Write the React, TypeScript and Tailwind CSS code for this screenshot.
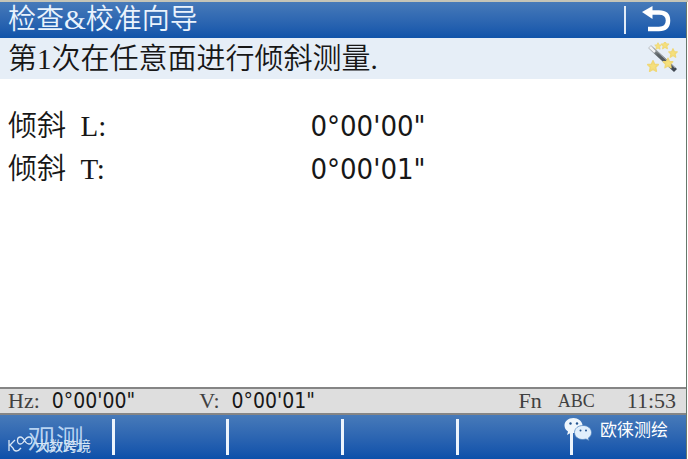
import { useState } from 'react';

const readings = [
  { label: '倾斜  L:', value: '0°00\'00"' },
  { label: '倾斜  T:', value: '0°00\'01"' },
];

const softKeys = ['观测', '', '', '', '', ''];

const numberFont = "font-['DejaVu_Sans_Condensed','Noto_Sans',sans-serif]";
const textFont = "font-['Liberation_Serif','Noto_Sans_CJK_SC',serif]";

function BackIcon() {
  return (
    <svg width="30" height="28" viewBox="0 0 30 28" fill="none" aria-hidden="true">
      <path d="M8 6.500H17C23.500 6.500 26 9.500 26 14.500S23.500 23 17 23H6" stroke="white" strokeWidth="4.500" />
      <path d="M0 6L10.500 0V13Z" fill="white" />
    </svg>
  );
}

function WandIcon() {
  const star = 'M0 -5L1.500 -1.600L5 -1.300L2.400 1.200L3.200 5L0 3L-3.200 5L-2.400 1.200L-5 -1.300L-1.500 -1.600Z';
  return (
    <svg width="34" height="34" viewBox="0 0 34 34" aria-hidden="true">
      <defs>
        <linearGradient id="wand" x1="0" y1="0" x2="1" y2="1">
          <stop offset="0" stopColor="#d4d8dc" />
          <stop offset="0.35" stopColor="#5d6468" />
          <stop offset="1" stopColor="#3d4550" />
        </linearGradient>
      </defs>
      <path d="M2 6L5 3L31 27L28 30Z" fill="url(#wand)" />
      <path d="M10 8.500L29 26" stroke="#aeb4b8" strokeWidth="0.8" />
      <path d="M4 5L9 10" stroke="#f1f2f3" strokeWidth="2.500" />
      <g fill="#f5e07c" stroke="#f0d876" strokeWidth="1.500" strokeLinejoin="round">
        <path d={star} transform="translate(12 4) scale(0.65)" />
        <path d={star} transform="translate(19 3) scale(0.75)" />
        <path d={star} transform="translate(27 11) scale(0.85)" />
        <path d={star} transform="translate(7 24) scale(1.05)" />
        <path d={star} transform="translate(22 21) scale(0.95)" />
      </g>
    </svg>
  );
}

function ChatIcon() {
  return (
    <svg width="28" height="24" viewBox="0 0 28 24" aria-hidden="true">
      <path d="M9.500 1C4.300 1 .500 4.200 .500 8.500C.500 11 1.800 13.200 4 14.500L3 18L7 15.800C8.600 16.200 10.500 16.200 12 15.800C17 15 19 12 18.500 8C18 4 14 1 9.500 1Z" fill="#eff6fc" />
      <path d="M19 8.500C14 8.500 10.500 11.500 10.500 15.500C10.500 19.500 14 22.500 19 22.500L22 22L25 23.500L24.300 21C26.500 19.700 27.500 17.800 27.500 15.500C27.500 11.500 24 8.500 19 8.500Z" fill="#e1effc" stroke="#4f82bd" strokeWidth="0.7" />
      <g fill="#235490">
        <circle cx="6.500" cy="6.500" r="1.200" />
        <circle cx="13" cy="6.500" r="1.200" />
        <circle cx="16.500" cy="13.500" r="1" />
        <circle cx="22" cy="13.500" r="1" />
      </g>
    </svg>
  );
}

function LoopIcon() {
  return (
    <svg width="27" height="20" viewBox="0 0 27 20" fill="none" stroke="#d8e6f5" strokeWidth="1.300" aria-hidden="true">
      <path d="M1 5V16M7 5L2 10L5 13C6 17 10 17 13 13" />
      <path d="M16.500 5.500C15 3 14 2 12.500 2C10.500 2 9.500 3.500 9.500 5.500S10.500 9 12.500 9C14 9 15 8 16.500 5.500S19.500 2 21 2C23 2 24 3.500 24 5.500S23 9 21 9C19.500 9 18 8 16.500 5.500Z" />
    </svg>
  );
}

export default function App() {
  const [measured, setMeasured] = useState(false);

  return (
    <div className={`relative flex min-h-screen flex-col border-t-2 border-[#c5c4b7] bg-white text-[#171717] ${textFont}`}>
      <header className="flex h-9 items-center justify-between bg-linear-to-b from-[#477ab9] to-[#1054aa] pr-4 pl-2 text-[#eaf3fd]">
        <h1 className="text-[28px] leading-9 font-[350]">检查&amp;校准向导</h1>
        <div className="flex items-center gap-4">
          <span className="h-7 w-0.5 bg-[#e1ebf7]" />
          <button type="button" aria-label="返回" onClick={() => setMeasured(false)}>
            <BackIcon />
          </button>
        </div>
      </header>

      <div className="flex h-[41px] items-center justify-between bg-[#e6eef7] px-2">
        <p className="text-[29px] leading-9 font-[350]">第1次在任意面进行倾斜测量.</p>
        <WandIcon />
      </div>

      <main className="flex-1 px-2 pt-[25px]">
        <dl>
          {readings.map((r) => (
            <div key={r.label} className="grid h-[43px] grid-cols-[45%_1fr] items-center">
              <dt className="text-[29px] leading-10 font-[350] whitespace-pre">{r.label}</dt>
              <dd className={`text-[29px] leading-10 ${numberFont}`}>{r.value}</dd>
            </div>
          ))}
        </dl>
      </main>

      <div className="flex h-7 items-center justify-between border-y-2 border-[#858585] bg-[#dedede] pr-3 pl-2 text-[22px] leading-6 text-[#404040]">
        <div className="flex gap-16">
          <div className="flex items-center gap-3">
            <span>Hz:</span>
            <span className={`text-[21px] text-[#171717] ${numberFont}`}>0°00'00"</span>
          </div>
          <div className="flex items-center gap-3">
            <span>V:</span>
            <span className={`text-[21px] text-[#171717] ${numberFont}`}>0°00'01"</span>
          </div>
        </div>
        <div className="flex items-center gap-4">
          <span>Fn</span>
          <span className="text-[18px]">ABC</span>
          <span className="pl-4">11:53</span>
        </div>
      </div>

      <nav className="grid h-11 grid-cols-6 bg-linear-to-b from-[#477ab9] to-[#0c50aa] text-white">
        {softKeys.map((key, i) => (
          <div key={i} className="flex items-center">
            <button
              type="button"
              aria-label={key || `F${i + 1}`}
              aria-pressed={i === 0 ? measured : undefined}
              onClick={() => i === 0 && setMeasured(!measured)}
              className="h-11 flex-1 pt-2 text-[28px] leading-9 font-[350] text-[#b9d4f2]"
            >
              {key}
            </button>
            {i < 5 && <span className="h-9 w-[3px] bg-[#edf4fc]" />}
          </div>
        ))}
      </nav>

      <div className="absolute bottom-1 left-2 flex items-center font-['Noto_Sans_CJK_SC',sans-serif] text-[14px] leading-5 text-[#d8e6f5]">
        <LoopIcon />
        <span>大数跨境</span>
      </div>
      <div className="absolute right-5 bottom-4 flex items-center gap-2 font-['Noto_Sans_CJK_SC',sans-serif] text-[17px] leading-7 text-white">
        <ChatIcon />
        <span>欧徕测绘</span>
      </div>
      <div className="absolute inset-y-0 right-0 w-0.5 border-l border-[#66786b] bg-white" />
    </div>
  );
}
